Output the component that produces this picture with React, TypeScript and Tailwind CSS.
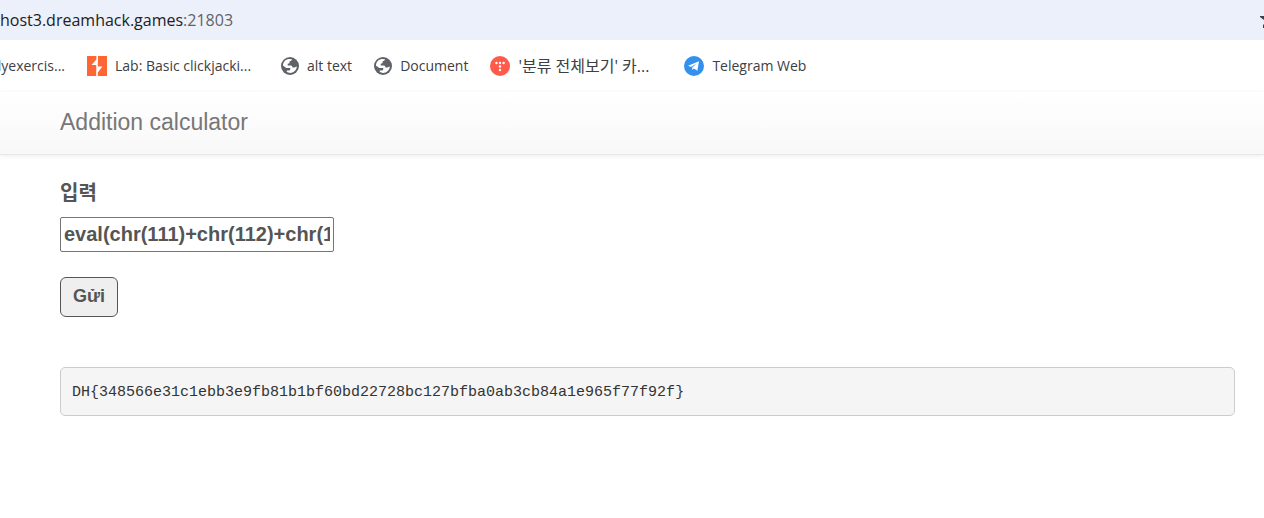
import type { ReactNode } from "react";

function GlobeIcon() {
  return (
    <svg viewBox="0 0 18 18" className="size-[18px] shrink-0" aria-hidden="true">
      <circle cx="9" cy="9" r="9" fill="#5f6368" />
      <path d="M2 8.7C2 5.3 4.4 2.5 7.8 2.1L11 2.3C10.7 3.6 10 4.3 8.6 4.3V5.6C8.6 6.5 7.8 6.7 6.7 6.7V8.5H9.7C11 8.5 11.4 9.3 11.4 10.5H13.3C14.4 10.5 14.9 9.6 15.9 9.5C15.6 13 12.7 15.9 9 15.9C7.8 15.9 6.7 15.6 5.8 15.1V13.4H7.8C8.7 13.4 9.3 12.8 9.3 11.9V11.1H6C4.6 11.1 4.1 9.5 2 8.7Z" fill="#fff" />
    </svg>
  );
}

function BurpIcon() {
  return (
    <svg viewBox="0 0 20 20" className="size-5 shrink-0" aria-hidden="true">
      <path d="M0 0H20V20H0Z" fill="#ff6633" />
      <path d="M11 0V3.5L10.8 9H4.5L9.4 3.5V0Z M9.2 20V16.5L9.4 10.4H15.4L10.8 16.5V20Z M8 7.5H10.8V12H9.2V9H8Z" fill="#fff" />
    </svg>
  );
}

function TistoryIcon() {
  return (
    <svg viewBox="0 0 20 20" className="size-5 shrink-0" aria-hidden="true">
      <circle cx="10" cy="10" r="10" fill="#ff5a4a" />
      <g fill="#fff">
        <circle cx="6.4" cy="7" r="1.2" />
        <circle cx="10" cy="7" r="1.2" />
        <circle cx="13.6" cy="7" r="1.2" />
        <circle cx="10" cy="10.5" r="1.2" />
        <circle cx="10" cy="14" r="1.2" />
      </g>
    </svg>
  );
}

function TelegramIcon() {
  return (
    <svg viewBox="0 0 20 20" className="size-5 shrink-0" aria-hidden="true">
      <circle cx="10" cy="10" r="10" fill="#3390ec" />
      <path d="M4 9.7L15 5.2L13.4 14.8L9.9 12.4L8.2 14V11.4L12.7 7.3L7 10.9Z" fill="#fff" />
    </svg>
  );
}

function Bookmark({ icon, label, labelClass = "" }: { icon: ReactNode; label: string; labelClass?: string }) {
  return (
    <a href="#" className="flex items-center gap-2 whitespace-nowrap">
      {icon}
      <span className={labelClass}>{label}</span>
    </a>
  );
}

export default function App() {
  return (
    <div className="min-h-screen overflow-x-hidden bg-white font-['Liberation_Sans',sans-serif]">
      <div className="flex h-10 items-center justify-between bg-[#ecf0fa] font-['Open_Sans','Noto_Sans_CJK_KR',sans-serif] text-base text-[#202124]">
        <span>
          host3.dreamhack.games<span className="text-[#5f6368]">:21803</span>
        </span>
        <svg viewBox="0 0 4 20" className="h-5 w-1" aria-hidden="true">
          <path d="M0 6H4V10L0 7Z M3 15L4 14V18H3Z" fill="#3c4043" />
        </svg>
      </div>
      <nav
        aria-label="Bookmarks"
        className="flex h-[52px] items-center gap-[22px] font-['Open_Sans','Noto_Sans_CJK_KR',sans-serif] text-sm text-[#3c4043]"
      >
        <a href="#" className="flex w-[65px] justify-end whitespace-nowrap">lyexercis...</a>
        <Bookmark icon={<BurpIcon />} label="Lab: Basic clickjacki..." labelClass="w-36" />
        <Bookmark icon={<GlobeIcon />} label="alt text" />
        <Bookmark icon={<GlobeIcon />} label="Document" />
        <Bookmark icon={<TistoryIcon />} label="'분류 전체보기' 카..." labelClass="w-36 text-base" />
        <Bookmark icon={<TelegramIcon />} label="Telegram Web" />
      </nav>
      <header className="flex h-[63px] items-center border-b border-[#e7e7e7] bg-linear-to-b from-white to-[#f8f8f8] px-[60px] pb-0.5 shadow-[0_1px_5px_rgba(0,0,0,0.075)]">
        <a href="#" className="text-[23px] text-[#777777]">Addition calculator</a>
      </header>
      <main className="pt-6 pr-[29px] pl-[60px] text-[#555555]">
        <form onSubmit={(event) => event.preventDefault()} className="flex flex-col items-start font-bold">
          <label htmlFor="expression" className="font-['Liberation_Sans','Noto_Sans_CJK_KR',sans-serif] text-xl leading-7">
            입력
          </label>
          <input
            id="expression"
            type="text"
            defaultValue="eval(chr(111)+chr(112)+chr(1"
            className="mt-[10px] h-[35px] w-[274px] rounded-xs border border-[#767676] px-[3px] text-xl"
          />
          <button
            type="submit"
            className="mt-[25px] h-10 rounded-md border border-[#555555] bg-[#efefef] px-3 pb-0.5 text-lg"
          >
            Gửi
          </button>
        </form>
        <pre className="mt-[50px] overflow-x-auto rounded-[5px] border border-[#cccccc] bg-[#f5f5f5] px-[11px] pt-[13px] pb-[11px] font-['Liberation_Mono',monospace] text-[15px] leading-[23px] text-[#333333]">
          DH{"{"}348566e31c1ebb3e9fb81b1bf60bd22728bc127bfba0ab3cb84a1e965f77f92f{"}"}
        </pre>
      </main>
    </div>
  );
}
